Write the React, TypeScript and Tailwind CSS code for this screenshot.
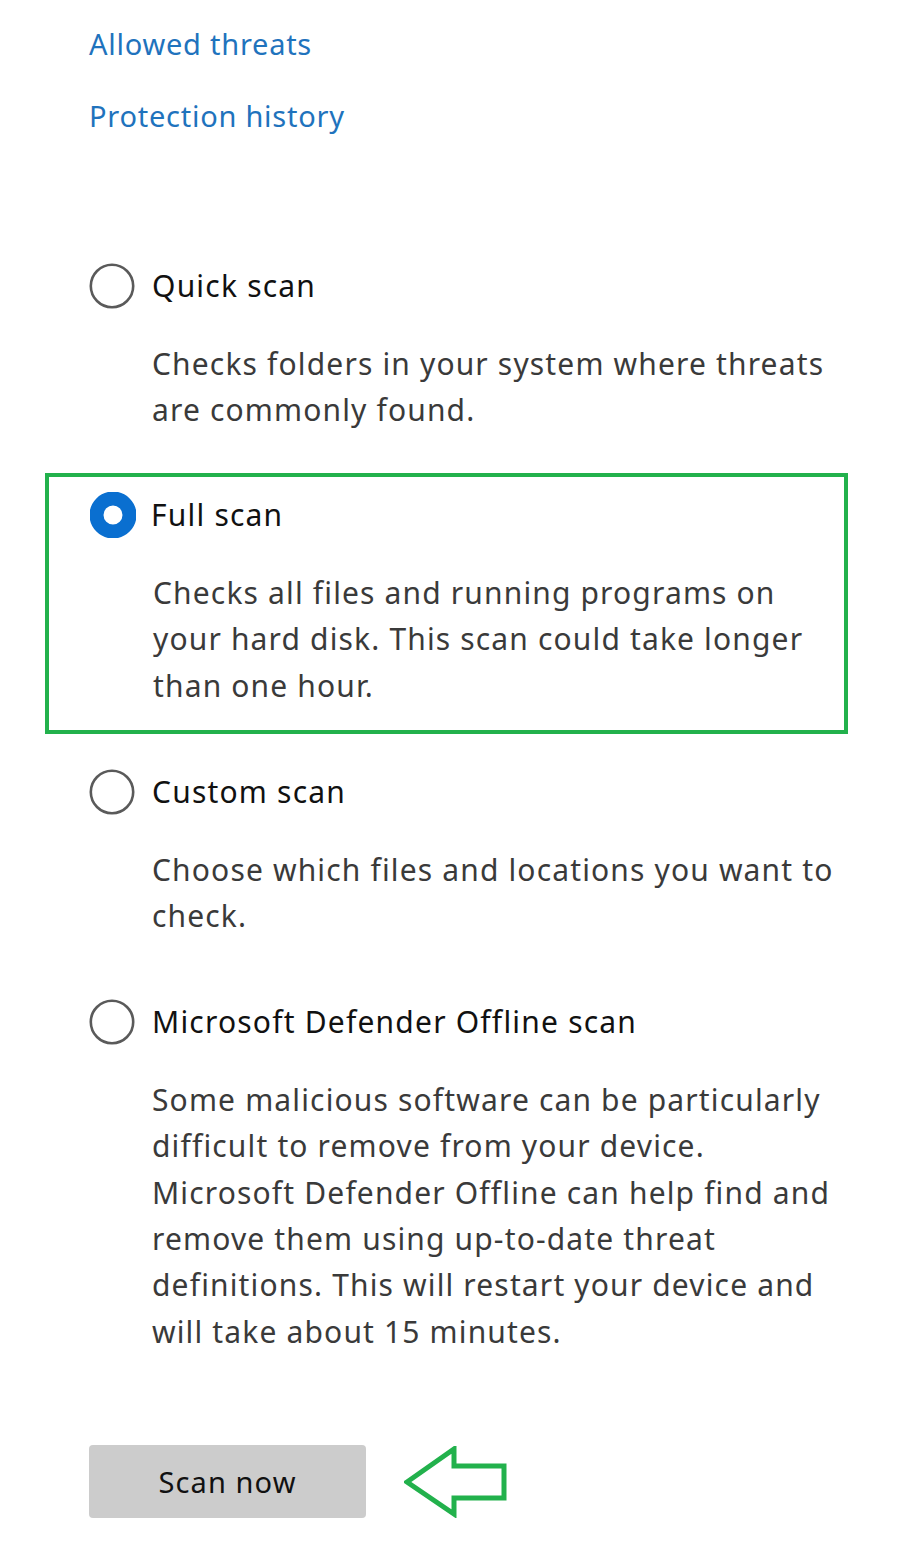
import React from "react";

const font = { fontFamily: '"Noto Sans", "Open Sans", sans-serif' };

function Radio({ checked }: { checked?: boolean }) {
  return checked ? (
    <svg width="46" height="46" viewBox="0 0 46 46" className="shrink-0">
      <circle cx="23" cy="23" r="16.5" fill="none" stroke="#0a6fd0" strokeWidth="14" />
    </svg>
  ) : (
    <svg width="46" height="46" viewBox="0 0 46 46" className="shrink-0">
      <circle cx="23" cy="23" r="21.2" fill="#fff" stroke="#5a5a5a" strokeWidth="2.6" />
    </svg>
  );
}

function Option({
  label,
  lines,
  checked,
}: {
  label: string;
  lines: string[];
  checked?: boolean;
}) {
  return (
    <div className="flex flex-col">
      <div className="flex items-center h-[46px]">
        <Radio checked={checked} />
        <span
          className={`${checked ? "ml-[15px]" : "ml-[17px]"} text-[30px] leading-[46px] tracking-[1.2px] text-[#111] whitespace-nowrap`}
        >
          {label}
        </span>
      </div>
      <div className="mt-[32px] pl-[63px] text-[30px] leading-[46.4px] tracking-[1.15px] text-[#3a3a3a]">
        {lines.map((l, i) => (
          <div key={i} className="whitespace-nowrap">
            {l}
          </div>
        ))}
      </div>
    </div>
  );
}

export default function App() {
  return (
    <div className="w-[900px] h-[1561px] bg-white relative overflow-hidden" style={font}>
      <div className="pl-[89px] pt-[24px] flex flex-col">
        <div className="text-[29px] leading-[40px] tracking-[0.75px] text-[#1f73bd]">Allowed threats</div>
        <div className="mt-[32px] text-[29px] leading-[40px] tracking-[0.75px] text-[#1f73bd]">
          Protection history
        </div>
      </div>

      <div className="mt-[127px] pl-[89px]">
        <Option
          label="Quick scan"
          lines={["Checks folders in your system where threats", "are commonly found."]}
        />
      </div>

      <div className="mt-[39px] ml-[45px] w-[803px] border-4 border-[#22b14c] pl-[41px] pt-[15px] pb-[21px]">
        <Option
          checked
          label="Full scan"
          lines={[
            "Checks all files and running programs on",
            "your hard disk. This scan could take longer",
            "than one hour.",
          ]}
        />
      </div>

      <div className="mt-[35px] pl-[89px]">
        <Option
          label="Custom scan"
          lines={["Choose which files and locations you want to", "check."]}
        />
      </div>

      <div className="mt-[59px] pl-[89px]">
        <Option
          label="Microsoft Defender Offline scan"
          lines={[
            "Some malicious software can be particularly",
            "difficult to remove from your device.",
            "Microsoft Defender Offline can help find and",
            "remove them using up-to-date threat",
            "definitions. This will restart your device and",
            "will take about 15 minutes.",
          ]}
        />
      </div>

      <div className="mt-[90px] pl-[89px] flex items-center">
        <button className="w-[277px] h-[73px] bg-[#cccccc] rounded-[4px] text-[29px] tracking-[1.1px] text-[#111] flex items-center justify-center">
          Scan now
        </button>
        <svg width="106" height="72" viewBox="0 0 106 72" className="ml-[38px]">
          <polygon
            points="3,36 50,3 50,20 100,20 100,52 50,52 50,68"
            fill="none"
            stroke="#22b14c"
            strokeWidth="5"
            strokeLinejoin="miter"
          />
        </svg>
      </div>
    </div>
  );
}
